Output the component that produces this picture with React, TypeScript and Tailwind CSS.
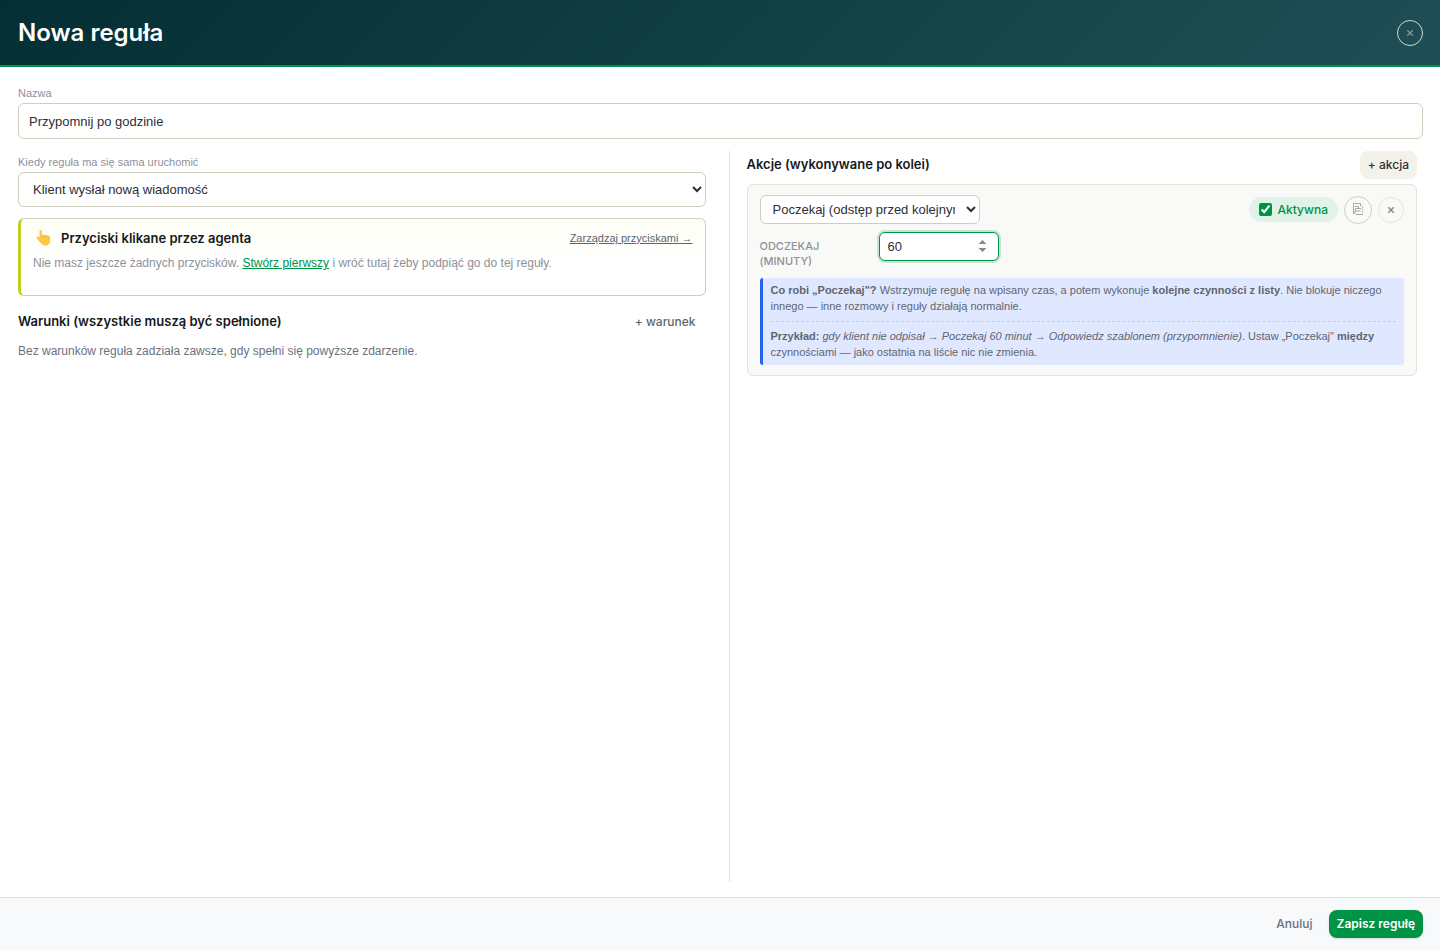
import React, { useState } from "react"

const PointingHand = () => (
  <svg viewBox="0 0 18 18" className="w-[18px] h-[18px]" aria-hidden="true">
    <path
      d="M4.500 2.300C4.500 1.400 5 1 5.700 1s1.200.5 1.200 1.200V6.200c.4-.7 1.800-.8 2.300 0 .6-.6 1.800-.5 2.200.3.600-.5 1.800-.3 2.100.6 1 .1 1.700.8 1.700 1.900v2.500c0 2.900-2 5-4.800 5-2.200 0-3.800-1-4.800-2.700L1.700 9.600c-.5-.9-.2-1.800.6-2 .8-.2 1.500.2 2.200 1z"
      fill="#ffc83d"
    />
    <path
      d="M6.900 6.200v2.300M9.300 6.200v2.300M11.500 6.600v2.100M13.500 7.300v1.700"
      fill="none"
      stroke="#eba92f"
      strokeWidth="0.5"
      strokeLinecap="round"
    />
  </svg>
)

const CopyIcon = () => (
  <svg viewBox="0 0 12 14" className="w-3 h-3.5" fill="none" stroke="currentColor" strokeWidth="1" aria-hidden="true">
    <path d="M8.500 2.500V.5H1.500V10.500H3" />
    <path d="M3 3.500H6.500V5.500H3.500V8H8.500M6 5.500H9M3 8V10.500M4 11.500H10.500" />
    <path d="M10.500 3.500V11.500M8 2.500H10.500" strokeDasharray="1.300 1" />
  </svg>
)

const CloseIcon = () => (
  <svg viewBox="0 0 8 8" className="w-2 h-2" fill="none" stroke="currentColor" strokeWidth="1.3" aria-hidden="true">
    <path d="M1.300 1.300l5.400 5.400M6.700 1.300L1.300 6.700" />
  </svg>
)

const Header = () => (
  <header className="flex items-center justify-between h-[67px] pl-[18px] pr-[17px] border-b-2 border-[#009245] bg-linear-135 from-[#042f34] to-[#1f4f55]">
    <h1 className="font-['Inter',sans-serif] text-2xl font-semibold text-white">Nowa reguła</h1>
    <button
      aria-label="Zamknij"
      className="flex items-center justify-center w-[26px] h-[26px] rounded-full border border-[#d6d6c8] text-[#8b949b]"
    >
      <CloseIcon />
    </button>
  </header>
)

const ButtonsCard = () => (
  <section className="mt-[11px] h-[78px] px-3 py-2.5 rounded-md border border-l-3 border-[#cfcfbf] border-l-[#c0d020] bg-linear-to-b from-[#fdfef5] to-white to-60%">
    <div className="flex items-center justify-between">
      <h2 className="flex items-center gap-2 pl-0.5 font-['Inter',sans-serif] text-[13px] leading-[18px] font-semibold text-[#16191d]">
        <PointingHand />
        Przyciski klikane przez agenta
      </h2>
      <a href="#przyciski" className="text-[11px] leading-[18px] text-[#5f6570] underline">
        Zarządzaj przyciskami →
      </a>
    </div>
    <p className="mt-[7px] text-xs leading-[18px] text-[#8d919b]">
      Nie masz jeszcze żadnych przycisków.{" "}
      <a href="#nowy" className="text-[#009245] underline">Stwórz pierwszy</a>
      {" "}i wróć tutaj żeby podpiąć go do tej reguły.
    </p>
  </section>
)

const ActionCard = () => {
  const [active, setActive] = useState<boolean>(true)
  const [minutes, setMinutes] = useState<string>("60")

  return (
    <section className="mt-[5px] px-3 py-2.5 rounded-md border border-[#e2e2d8] bg-[#f9f9f7]">
      <div className="flex items-center justify-between">
        <select
          aria-label="Rodzaj akcji"
          className="w-[220px] h-[29px] px-2 rounded-md border border-[#cfcfbf] bg-white text-[13px] text-[#2c3036]"
        >
          <option>Poczekaj (odstęp przed kolejnym krokiem)</option>
        </select>
        <div className="flex items-center gap-1.5">
          <label className="flex items-center gap-1.5 h-[25px] px-2.5 rounded-full bg-[#e1f3e9] font-['Inter',sans-serif] text-xs font-medium text-[#009245]">
            <input
              type="checkbox"
              checked={active}
              onChange={e => setActive(e.target.checked)}
              className="w-[13px] h-[13px] accent-[#009245]"
            />
            Aktywna
          </label>
          <button
            aria-label="Duplikuj akcję"
            className="flex items-center justify-center w-7 h-7 rounded-full border border-[#cfcfbf] text-[#a3a7b0]"
          >
            <CopyIcon />
          </button>
          <button
            aria-label="Usuń akcję"
            className="flex items-center justify-center w-[26px] h-[26px] rounded-full border border-[#e6e6da] text-[#7b818a]"
          >
            <CloseIcon />
          </button>
        </div>
      </div>

      <div className="flex items-start gap-[9px] mt-2">
        <label
          htmlFor="minutes"
          className="w-[110px] pt-[7px] font-['Inter',sans-serif] text-[11px] leading-[15px] font-medium uppercase text-[#8d919b]"
        >
          Odczekaj (minuty)
        </label>
        <input
          id="minutes"
          type="number"
          autoFocus
          value={minutes}
          onChange={e => setMinutes(e.target.value)}
          className="w-[120px] h-[29px] px-2 rounded-md border border-[#009245] bg-white text-[13px] text-[#2c3036] caret-transparent outline-none ring-2 ring-[#009245]/20 [&::-webkit-inner-spin-button]:opacity-100"
        />
      </div>

      <div className="mt-[9px] pt-1 pb-[5px] px-2 rounded-[3px] border-l-3 border-[#2563eb] bg-[#e0e8ff] text-[11px] leading-4 text-[#5f6570]">
        <p>
          <strong className="font-bold">Co robi „Poczekaj"?</strong> Wstrzymuje regułę na wpisany czas, a potem wykonuje{" "}
          <strong className="font-bold">kolejne czynności z listy</strong>. Nie blokuje niczego innego — inne rozmowy i reguły działają normalnie.
        </p>
        <p className="mt-[7px] pt-1.5 border-t border-dashed border-[#c7cfe6]">
          <strong className="font-bold">Przykład:</strong>{" "}
          <em>gdy klient nie odpisał → Poczekaj 60 minut → Odpowiedz szablonem (przypomnienie)</em>. Ustaw „Poczekaj"{" "}
          <strong className="font-bold">między</strong> czynnościami — jako ostatnia na liście nic nie zmienia.
        </p>
      </div>
    </section>
  )
}

export const RulePage = () => {
  const [name, setName] = useState<string>("Przypomnij po godzinie")

  return (
    <div className="flex flex-col min-h-screen bg-white font-['Liberation_Sans',sans-serif]">
      <Header />

      <main className="flex flex-col flex-1 pl-[18px] pr-[17px] pt-[18px] pb-[15px]">
        <label htmlFor="name" className="text-[11px] leading-4 text-[#8d919b]">Nazwa</label>
        <input
          id="name"
          value={name}
          onChange={e => setName(e.target.value)}
          className="mt-0.5 h-9 px-2.5 rounded-md border border-[#cfcfbf] text-[13px] text-[#2c3036]"
        />

        <div className="grid grid-cols-2 gap-4 flex-1 mt-3">
          <div className="pr-[7px]">
            <label htmlFor="trigger" className="block pt-[3px] text-[11px] leading-4 text-[#8d919b]">
              Kiedy reguła ma się sama uruchomić
            </label>
            <select
              id="trigger"
              className="w-full mt-0.5 h-[35px] px-2.5 rounded-md border border-[#cfcfbf] bg-white text-[13px] text-[#2c3036]"
            >
              <option>Klient wysłał nową wiadomość</option>
            </select>

            <ButtonsCard />

            <div className="flex items-center justify-between mt-3">
              <h2 className="font-['Inter',sans-serif] text-[13px] font-semibold text-[#16191d]">Warunki (wszystkie muszą być spełnione)</h2>
              <button className="h-7 px-2.5 font-['Inter',sans-serif] text-xs font-medium text-[#5f6570]">+ warunek</button>
            </div>
            <p className="mt-1.5 text-xs leading-[18px] text-[#6b717c]">
              Bez warunków reguła zadziała zawsze, gdy spełni się powyższe zdarzenie.
            </p>
          </div>

          <div className="pl-[17px] pr-1.5 border-l border-[#e2e2d8]">
            <div className="flex items-center justify-between">
              <h2 className="font-['Inter',sans-serif] text-[13px] font-semibold text-[#16191d]">Akcje (wykonywane po kolei)</h2>
              <button className="h-7 px-2 rounded-lg bg-[#f4f1ea] font-['Inter',sans-serif] text-xs font-medium text-[#2c3036]">+ akcja</button>
            </div>
            <ActionCard />
          </div>
        </div>
      </main>

      <footer className="flex items-center justify-end gap-2 h-[53px] pr-[17px] border-t border-[#e2e2d8] bg-[#f8f9fb]">
        <button className="h-7 px-2 font-['Inter',sans-serif] text-xs font-medium text-[#6b717c]">Anuluj</button>
        <button className="h-7 px-2 rounded-lg bg-[#009245] font-['Inter',sans-serif] text-xs font-semibold text-white shadow-sm">Zapisz regułę</button>
      </footer>
    </div>
  )
}

export default RulePage
